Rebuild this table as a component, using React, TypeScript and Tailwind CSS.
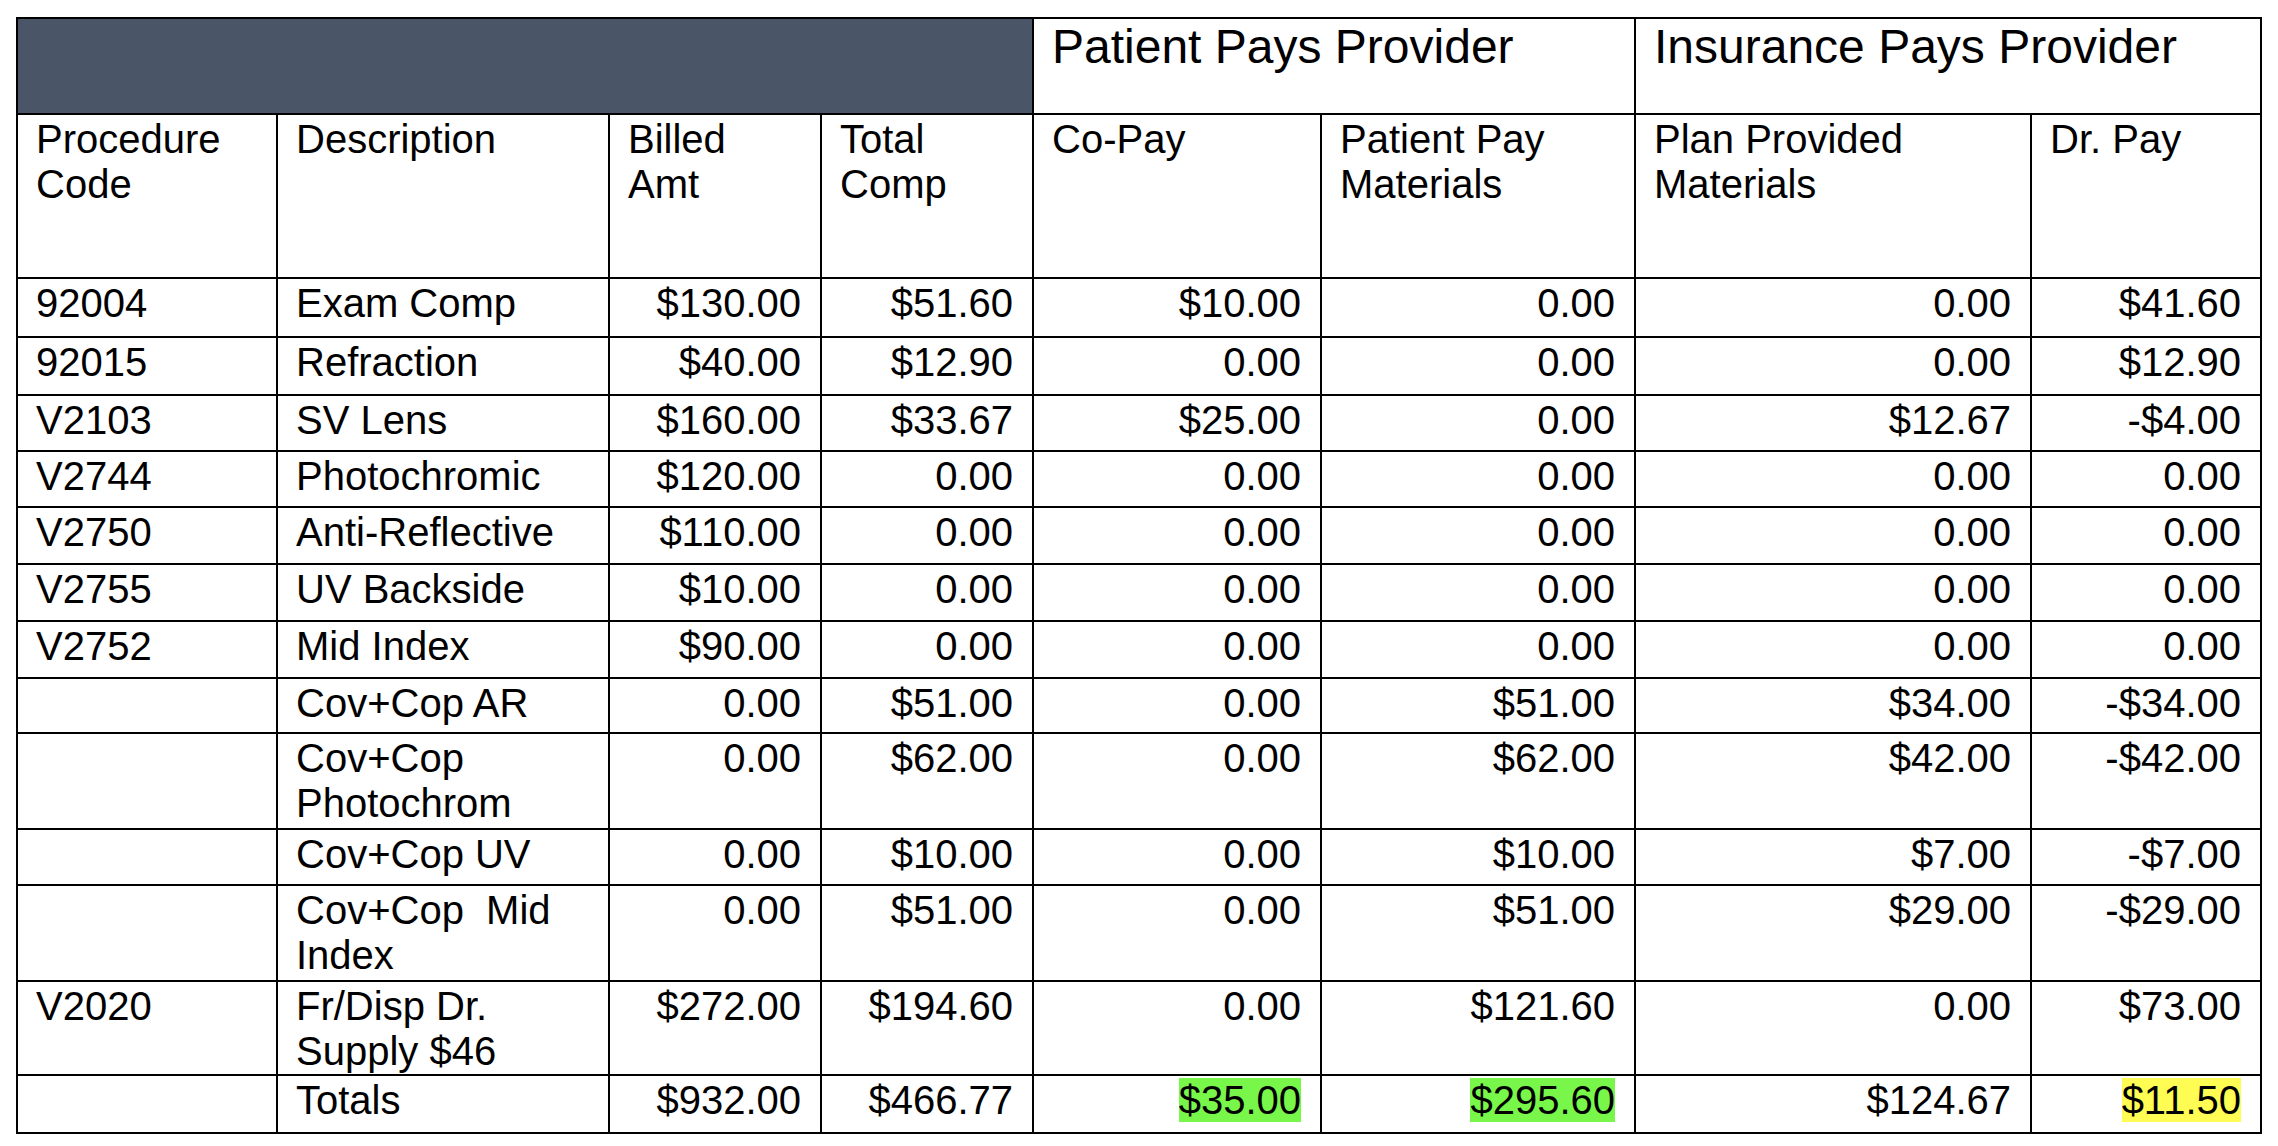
import React from "react";

type Row = {
  code: string;
  desc: string;
  vals: string[];
  h: string;
};

const rows: Row[] = [
  { code: "92004", desc: "Exam Comp", vals: ["$130.00", "$51.60", "$10.00", "0.00", "0.00", "$41.60"], h: "h-[59px]" },
  { code: "92015", desc: "Refraction", vals: ["$40.00", "$12.90", "0.00", "0.00", "0.00", "$12.90"], h: "h-[58px]" },
  { code: "V2103", desc: "SV Lens", vals: ["$160.00", "$33.67", "$25.00", "0.00", "$12.67", "-$4.00"], h: "h-[56px]" },
  { code: "V2744", desc: "Photochromic", vals: ["$120.00", "0.00", "0.00", "0.00", "0.00", "0.00"], h: "h-[56px]" },
  { code: "V2750", desc: "Anti-Reflective", vals: ["$110.00", "0.00", "0.00", "0.00", "0.00", "0.00"], h: "h-[57px]" },
  { code: "V2755", desc: "UV Backside", vals: ["$10.00", "0.00", "0.00", "0.00", "0.00", "0.00"], h: "h-[57px]" },
  { code: "V2752", desc: "Mid Index", vals: ["$90.00", "0.00", "0.00", "0.00", "0.00", "0.00"], h: "h-[57px]" },
  { code: "", desc: "Cov+Cop AR", vals: ["0.00", "$51.00", "0.00", "$51.00", "$34.00", "-$34.00"], h: "h-[55px]" },
  { code: "", desc: "Cov+Cop Photochrom", vals: ["0.00", "$62.00", "0.00", "$62.00", "$42.00", "-$42.00"], h: "h-[96px]" },
  { code: "", desc: "Cov+Cop UV", vals: ["0.00", "$10.00", "0.00", "$10.00", "$7.00", "-$7.00"], h: "h-[56px]" },
  { code: "", desc: "Cov+Cop\u00a0 Mid Index", vals: ["0.00", "$51.00", "0.00", "$51.00", "$29.00", "-$29.00"], h: "h-[96px]" },
  { code: "V2020", desc: "Fr/Disp Dr. Supply $46", vals: ["$272.00", "$194.60", "0.00", "$121.60", "0.00", "$73.00"], h: "h-[94px]" },
];

const cell = "border-r-2 border-b-2 border-black pl-[18px] pr-[19px] pt-[2px]";

export default function App() {
  return (
    <div className="min-h-screen bg-white pt-[17px] pl-[16px] font-['Liberation_Sans',Arial,sans-serif] text-black">
      <div className="grid w-fit grid-cols-[260px_332px_212px_212px_288px_314px_396px_230px] border-l-2 border-t-2 border-black text-[40px] leading-[45px]">
        {/* Header row 1 */}
        <div className="col-span-4 h-[96px] border-r-2 border-b-2 border-black bg-[#4a5568]" />
        <div className="col-span-2 h-[96px] border-r-2 border-b-2 border-black pl-[18px] text-[48px] leading-[55px]">
          Patient Pays Provider
        </div>
        <div className="col-span-2 h-[96px] border-r-2 border-b-2 border-black pl-[18px] text-[48px] leading-[55px]">
          Insurance Pays Provider
        </div>

        {/* Header row 2 */}
        {["Procedure Code", "Description", "Billed Amt", "Total Comp", "Co-Pay", "Patient Pay Materials", "Plan Provided Materials", "Dr. Pay"].map((t) => (
          <div key={t} className={`${cell} h-[164px]`}>
            {t}
          </div>
        ))}

        {/* Body rows */}
        {rows.map((r, i) => (
          <React.Fragment key={i}>
            <div className={`${cell} ${r.h}`}>{r.code}</div>
            <div className={`${cell} ${r.h}`}>{r.desc}</div>
            {r.vals.map((v, j) => (
              <div key={j} className={`${cell} ${r.h} text-right`}>
                {v}
              </div>
            ))}
          </React.Fragment>
        ))}

        {/* Totals */}
        <div className={`${cell} h-[58px]`} />
        <div className={`${cell} h-[58px]`}>Totals</div>
        <div className={`${cell} h-[58px] text-right`}>$932.00</div>
        <div className={`${cell} h-[58px] text-right`}>$466.77</div>
        <div className={`${cell} h-[58px] text-right`}>
          <span className="bg-[#78f64a]">$35.00</span>
        </div>
        <div className={`${cell} h-[58px] text-right`}>
          <span className="bg-[#78f64a]">$295.60</span>
        </div>
        <div className={`${cell} h-[58px] text-right`}>$124.67</div>
        <div className={`${cell} h-[58px] text-right`}>
          <span className="bg-[#fffd54]">$11.50</span>
        </div>
      </div>
    </div>
  );
}
